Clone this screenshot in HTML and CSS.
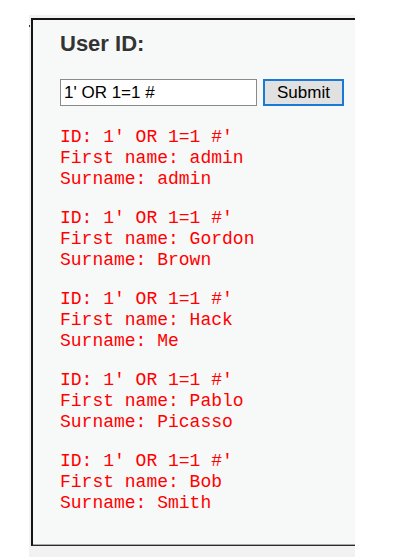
FILE: index.html
```html
<!DOCTYPE html>
<html>
<head>
<meta charset="utf-8">
<link rel="stylesheet" href="styles.css">
</head>
<body>
<div class="wrap">
  <div class="panel">
    <h1 class="title">User ID:</h1>
    <form class="form">
      <input class="field" type="text" value="1' OR 1=1 #">
      <button class="btn" type="button">Submit</button>
    </form>
    <pre class="result">ID: 1' OR 1=1 #'
First name: admin
Surname: admin</pre>
    <pre class="result">ID: 1' OR 1=1 #'
First name: Gordon
Surname: Brown</pre>
    <pre class="result">ID: 1' OR 1=1 #'
First name: Hack
Surname: Me</pre>
    <pre class="result">ID: 1' OR 1=1 #'
First name: Pablo
Surname: Picasso</pre>
    <pre class="result">ID: 1' OR 1=1 #'
First name: Bob
Surname: Smith</pre>
  </div>
</div>
</body>
</html>
```
FILE: styles.css
```css
html, body {
  margin: 0;
  padding: 0;
  background: #ffffff;
}
.wrap {
  position: relative;
  margin: 15px 0 0 29px;
  width: 324px;
  padding: 3px 0 11px 2px;
  background: #f2f2f2;
}
.wrap::before {
  content: "";
  position: absolute;
  left: 0;
  top: 10px;
  width: 1px;
  height: 2px;
  background: #333;
}
.panel {
  background: #f7f8f8;
  border-top: 2px solid #151515;
  border-left: 2px solid #151515;
  border-bottom: 1px solid #2a2a2a;
  box-shadow: inset 0 -1px 0 #a8a8a8;
  padding: 11px 0 31px 27px;
}
.title {
  margin: 0;
  font-family: "Liberation Sans", Arial, sans-serif;
  font-size: 22px;
  font-weight: bold;
  line-height: 26px;
  color: #333333;
}
.form {
  display: flex;
  align-items: center;
  gap: 6px;
  margin: 22px 0 0 0;
}
.field {
  box-sizing: border-box;
  width: 197px;
  height: 27px;
  margin: 0;
  padding: 0 3px;
  border: 1px solid #8a8a8a;
  background: #ffffff;
  font-family: "Liberation Sans", Arial, sans-serif;
  font-size: 17px;
  color: #000;
  outline: none;
}
.btn {
  box-sizing: border-box;
  width: 81px;
  height: 27px;
  margin: 0;
  padding: 0;
  border: 2px solid #1a78d6;
  background: #e1e1e1;
  border-radius: 0;
  font-family: "Liberation Sans", Arial, sans-serif;
  font-size: 17px;
  color: #000;
}
.result {
  margin: 18px 0 0 0;
  font-family: "Liberation Mono", "Courier New", monospace;
  font-size: 18px;
  line-height: 21px;
  color: #ff0000;
}
.form + .result {
  margin-top: 21px;
}
```
